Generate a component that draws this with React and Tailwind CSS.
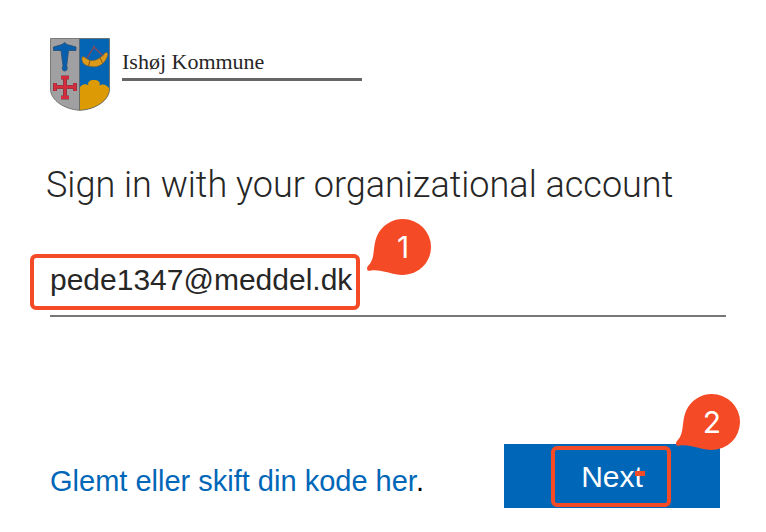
function Crest() {
  return (
    <svg className="h-[73px] w-[60px] shrink-0" viewBox="0 0 60 73" role="img" aria-label="Ishøj Kommune">
      <defs>
        <clipPath id="shield">
          <path d="M0.500 0.500H59.500V51C59.500 62 46 71.500 30 72.300C14 71.500 0.500 62 0.500 51Z" />
        </clipPath>
      </defs>
      <g clipPath="url(#shield)">
        <rect width="30" height="73" fill="#a0a0a2" />
        <rect x="29.500" width="31" height="73" fill="#0565b5" />
        <path
          d="M29.500 73V50C31 46 36 45 38.500 47.500C37 44 40 42 44 42C48 42 51 44 49.500 47.500C53 45 58 47 60 52V73Z"
          fill="#dc9b05"
        />
      </g>
      <path
        d="M3.500 9L12 6.500L14.500 4.500L17 6.500L26 9V12.500H18.500L16.700 28C18 30 17 33 14.700 33C12.400 33 11.500 30 13 28L11 12.500H3.500Z"
        fill="#075fae"
        stroke="#284e70"
        strokeWidth="0.800"
      />
      <path
        d="M32 19C34 18 36 20.500 39 22C45 24 51 20 55.500 14.500C57.500 14 58.500 16 57.500 18C55 26 48 30 41 28.500C35 28 31 25 32 19Z"
        fill="#dc9a18"
        stroke="#735d32"
        strokeWidth="0.700"
      />
      <path d="M37 20L44 9L53 18M44 10V7.500" fill="none" stroke="#8d4558" strokeWidth="1.300" />
      <path d="M40 22.500L38.500 28M50 19.500L52.500 25" stroke="#85551b" strokeWidth="1" />
      <path
        d="M15 39V60M5 49H25M11 39.500H19M11 59.500H19M5 45V53M25 45V53"
        fill="none"
        stroke="#6e3940"
        strokeWidth="4"
      />
      <path
        d="M15 39V60M5 49H25M11 39.500H19M11 59.500H19M5 45V53M25 45V53"
        fill="none"
        stroke="#d42c3d"
        strokeWidth="2.800"
      />
      <path
        d="M0.500 0.500H59.500V51C59.500 62 46 71.500 30 72.300C14 71.500 0.500 62 0.500 51Z"
        fill="none"
        stroke="#66655d"
        strokeWidth="0.800"
      />
      <path d="M29.500 1V72" stroke="#555f63" strokeWidth="0.700" />
    </svg>
  );
}

function Callout({ number, className }) {
  return (
    <div className={`pointer-events-none absolute h-14 w-16 ${className}`}>
      <svg className="absolute inset-0 h-full w-full" viewBox="0 0 64 56" aria-hidden="true">
        <path
          d="M36 0A28 28 0 1 1 36 56C25 56 14 50 4 51.500C0 53 -1 49 1 47C9 39 5 29 10 17C15 6 25 0 36 0Z"
          fill="#f54a26"
        />
      </svg>
      <span className="relative ml-2 flex h-full items-center justify-center font-[Inter,sans-serif] text-[30px] leading-none text-white">
        {number}
      </span>
    </div>
  );
}

export default function App() {
  return (
    <main className="bg-white pt-[38px] pr-10 pb-6 pl-[50px] font-['Liberation_Sans',Arial,sans-serif] text-[#262626]">
      <header className="flex items-start gap-3">
        <Crest />
        <p className="w-60 border-b-3 border-[#666] pt-3 pb-1 font-['Liberation_Serif',serif] text-[22px] leading-6">
          Ishøj Kommune
        </p>
      </header>

      <form className="flex flex-col" onSubmit={(event) => event.preventDefault()}>
        <h1 className="-ml-1 pt-[50px] pb-[45px] font-[Roboto,sans-serif] text-[36px] font-light leading-12 whitespace-nowrap">
          Sign in with your organizational account
        </h1>

        <div className="relative">
          <input
            type="email"
            aria-label="Email"
            defaultValue="pede1347@meddel.dk"
            className="block h-[63px] w-full border-b-2 border-[#777] pb-2.5 text-[30px] leading-9 outline-none"
          />
          <div className="pointer-events-none absolute -left-5 top-0 h-14 w-[330px] rounded-md border-4 border-[#f54a26]">
            <Callout number="1" className="-right-[75px] -top-[39px]" />
          </div>
        </div>

        <div className="flex items-center justify-between pt-[127px]">
          <p className="pt-2.5 text-[29px] leading-9 text-black">
            <a href="#kode" className="text-[#0067b8]">Glemt eller skift din kode her</a>.
          </p>
          <div className="relative mr-1.5">
            <button type="submit" className="block h-16 w-[216px] bg-[#0067b8] pt-0.5 text-[30px] leading-9 text-white">
              Next
            </button>
            <div className="pointer-events-none absolute left-[47px] top-0.5 h-[61px] w-[120px] rounded-md border-4 border-[#f54a26]">
              <div className="mt-[21px] ml-20 h-[5px] w-2.5 bg-[#f54a26]" />
            </div>
            <Callout number="2" className="-right-5 -top-[50px]" />
          </div>
        </div>
      </form>
    </main>
  );
}
